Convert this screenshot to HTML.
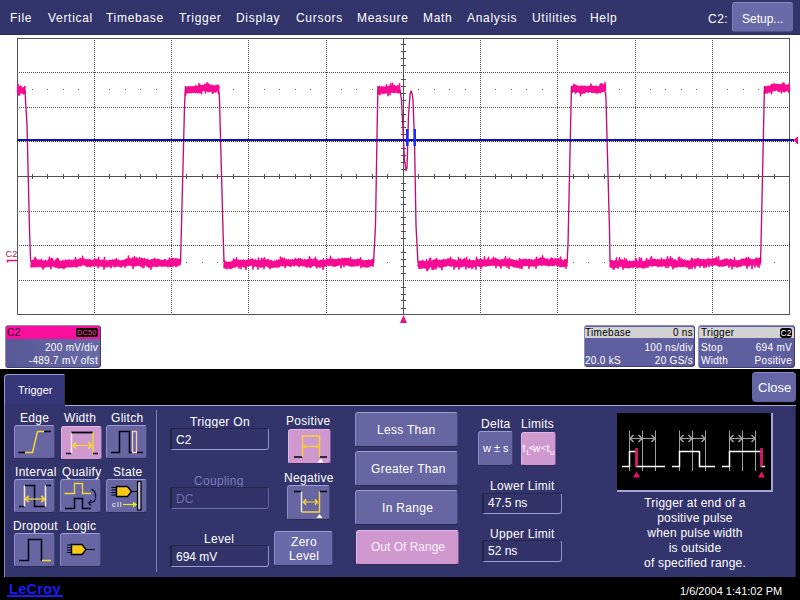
<!DOCTYPE html>
<html><head><meta charset="utf-8">
<style>
*{margin:0;padding:0;box-sizing:border-box}
html,body{width:800px;height:600px;overflow:hidden;background:#fff;font-family:"Liberation Sans",sans-serif;color:#fff}
.a{position:absolute}
.t{position:absolute;white-space:nowrap;line-height:1}
#menu{left:0;top:0;width:800px;height:35px;background:#34346c;border-bottom:1px solid #2a2a52}
#menu .t{font-size:12px;top:12px;color:#fff;letter-spacing:0.7px}
.setup{left:732px;top:2px;width:61px;height:30px;background:#6b6aa8;border-radius:3px;border-top:1px solid #8686c0;border-left:1px solid #8080bb;border-bottom:1px solid #505088}
.box{border-radius:4px;background:#5f5f9f;box-shadow:inset 1px 1px 0 #8e8cbc, inset -1px -1px 0 #3e3e6a}
.hdr{position:absolute;left:1px;top:1px;right:1px;height:12px}
.lab{font-size:12px;color:#fff;position:absolute;white-space:nowrap;line-height:1;letter-spacing:0.3px}
.btn{position:absolute;background:#6866a2;border-top:1px solid #9c9cd2;border-left:1px solid #8e8ec8;border-bottom:1px solid #2a2a55;border-right:1px solid #44447c;border-radius:3px}
.sel{background:#cf99cf;border-top:1px solid #e0b8e8;border-left:1px solid #deb6e6;border-bottom:1px solid #3a2a5a;border-right:1px solid #7a5a9a}
.inp{position:absolute;border-top:1px solid #26264e;border-left:2px solid #24243a;border-bottom:1px solid #9c9cd8;border-right:1px solid #9090d0;border-radius:0 3px 3px 0;background:#33336a}
.inp .t{font-size:12px;color:#fff;left:4px;top:5px}
</style></head><body>
<div id="menu" class="a">
  <div class="t" style="left:10px">File</div>
  <div class="t" style="left:48px">Vertical</div>
  <div class="t" style="left:106px">Timebase</div>
  <div class="t" style="left:179px">Trigger</div>
  <div class="t" style="left:236px">Display</div>
  <div class="t" style="left:296px">Cursors</div>
  <div class="t" style="left:357px">Measure</div>
  <div class="t" style="left:423px">Math</div>
  <div class="t" style="left:467px">Analysis</div>
  <div class="t" style="left:532px">Utilities</div>
  <div class="t" style="left:590px">Help</div>
  <div class="t" style="left:708px;font-size:12px;top:13px;letter-spacing:0.5px">C2:</div>
  <div class="a setup"><div class="t" style="left:9px;top:10px;font-size:12px;letter-spacing:0px">Setup...</div></div>
</div>

<svg class="a" style="left:0;top:0" width="800" height="330" viewBox="0 0 800 330">
<line x1="94.5" y1="38" x2="94.5" y2="314" stroke="#4a4a4a" stroke-width="1" stroke-dasharray="1 1"/>
<line x1="171.5" y1="38" x2="171.5" y2="314" stroke="#4a4a4a" stroke-width="1" stroke-dasharray="1 1"/>
<line x1="248.5" y1="38" x2="248.5" y2="314" stroke="#4a4a4a" stroke-width="1" stroke-dasharray="1 1"/>
<line x1="326.5" y1="38" x2="326.5" y2="314" stroke="#4a4a4a" stroke-width="1" stroke-dasharray="1 1"/>
<line x1="480.5" y1="38" x2="480.5" y2="314" stroke="#4a4a4a" stroke-width="1" stroke-dasharray="1 1"/>
<line x1="557.5" y1="38" x2="557.5" y2="314" stroke="#4a4a4a" stroke-width="1" stroke-dasharray="1 1"/>
<line x1="635.5" y1="38" x2="635.5" y2="314" stroke="#4a4a4a" stroke-width="1" stroke-dasharray="1 1"/>
<line x1="712.5" y1="38" x2="712.5" y2="314" stroke="#4a4a4a" stroke-width="1" stroke-dasharray="1 1"/>
<line x1="17" y1="72.5" x2="789" y2="72.5" stroke="#4a4a4a" stroke-width="1" stroke-dasharray="1 1"/>
<line x1="17" y1="107.5" x2="789" y2="107.5" stroke="#4a4a4a" stroke-width="1" stroke-dasharray="1 1"/>
<line x1="17" y1="141.5" x2="789" y2="141.5" stroke="#4a4a4a" stroke-width="1" stroke-dasharray="1 1"/>
<line x1="17" y1="211.5" x2="789" y2="211.5" stroke="#4a4a4a" stroke-width="1" stroke-dasharray="1 1"/>
<line x1="17" y1="245.5" x2="789" y2="245.5" stroke="#4a4a4a" stroke-width="1" stroke-dasharray="1 1"/>
<line x1="17" y1="280.5" x2="789" y2="280.5" stroke="#4a4a4a" stroke-width="1" stroke-dasharray="1 1"/>
<line x1="18" y1="176.5" x2="789" y2="176.5" stroke="#505050" stroke-width="1"/>
<line x1="403.5" y1="39" x2="403.5" y2="314" stroke="#505050" stroke-width="1"/>
<line x1="32.5" y1="174" x2="32.5" y2="179" stroke="#505050" stroke-width="1"/>
<line x1="47.5" y1="174" x2="47.5" y2="179" stroke="#505050" stroke-width="1"/>
<line x1="63.5" y1="174" x2="63.5" y2="179" stroke="#505050" stroke-width="1"/>
<line x1="78.5" y1="174" x2="78.5" y2="179" stroke="#505050" stroke-width="1"/>
<line x1="109.5" y1="174" x2="109.5" y2="179" stroke="#505050" stroke-width="1"/>
<line x1="125.5" y1="174" x2="125.5" y2="179" stroke="#505050" stroke-width="1"/>
<line x1="140.5" y1="174" x2="140.5" y2="179" stroke="#505050" stroke-width="1"/>
<line x1="156.5" y1="174" x2="156.5" y2="179" stroke="#505050" stroke-width="1"/>
<line x1="186.5" y1="174" x2="186.5" y2="179" stroke="#505050" stroke-width="1"/>
<line x1="202.5" y1="174" x2="202.5" y2="179" stroke="#505050" stroke-width="1"/>
<line x1="217.5" y1="174" x2="217.5" y2="179" stroke="#505050" stroke-width="1"/>
<line x1="233.5" y1="174" x2="233.5" y2="179" stroke="#505050" stroke-width="1"/>
<line x1="264.5" y1="174" x2="264.5" y2="179" stroke="#505050" stroke-width="1"/>
<line x1="279.5" y1="174" x2="279.5" y2="179" stroke="#505050" stroke-width="1"/>
<line x1="295.5" y1="174" x2="295.5" y2="179" stroke="#505050" stroke-width="1"/>
<line x1="310.5" y1="174" x2="310.5" y2="179" stroke="#505050" stroke-width="1"/>
<line x1="341.5" y1="174" x2="341.5" y2="179" stroke="#505050" stroke-width="1"/>
<line x1="356.5" y1="174" x2="356.5" y2="179" stroke="#505050" stroke-width="1"/>
<line x1="372.5" y1="174" x2="372.5" y2="179" stroke="#505050" stroke-width="1"/>
<line x1="387.5" y1="174" x2="387.5" y2="179" stroke="#505050" stroke-width="1"/>
<line x1="418.5" y1="174" x2="418.5" y2="179" stroke="#505050" stroke-width="1"/>
<line x1="434.5" y1="174" x2="434.5" y2="179" stroke="#505050" stroke-width="1"/>
<line x1="449.5" y1="174" x2="449.5" y2="179" stroke="#505050" stroke-width="1"/>
<line x1="465.5" y1="174" x2="465.5" y2="179" stroke="#505050" stroke-width="1"/>
<line x1="495.5" y1="174" x2="495.5" y2="179" stroke="#505050" stroke-width="1"/>
<line x1="511.5" y1="174" x2="511.5" y2="179" stroke="#505050" stroke-width="1"/>
<line x1="526.5" y1="174" x2="526.5" y2="179" stroke="#505050" stroke-width="1"/>
<line x1="542.5" y1="174" x2="542.5" y2="179" stroke="#505050" stroke-width="1"/>
<line x1="573.5" y1="174" x2="573.5" y2="179" stroke="#505050" stroke-width="1"/>
<line x1="588.5" y1="174" x2="588.5" y2="179" stroke="#505050" stroke-width="1"/>
<line x1="604.5" y1="174" x2="604.5" y2="179" stroke="#505050" stroke-width="1"/>
<line x1="619.5" y1="174" x2="619.5" y2="179" stroke="#505050" stroke-width="1"/>
<line x1="650.5" y1="174" x2="650.5" y2="179" stroke="#505050" stroke-width="1"/>
<line x1="665.5" y1="174" x2="665.5" y2="179" stroke="#505050" stroke-width="1"/>
<line x1="681.5" y1="174" x2="681.5" y2="179" stroke="#505050" stroke-width="1"/>
<line x1="696.5" y1="174" x2="696.5" y2="179" stroke="#505050" stroke-width="1"/>
<line x1="727.5" y1="174" x2="727.5" y2="179" stroke="#505050" stroke-width="1"/>
<line x1="743.5" y1="174" x2="743.5" y2="179" stroke="#505050" stroke-width="1"/>
<line x1="758.5" y1="174" x2="758.5" y2="179" stroke="#505050" stroke-width="1"/>
<line x1="774.5" y1="174" x2="774.5" y2="179" stroke="#505050" stroke-width="1"/>
<line x1="401" y1="44.5" x2="406" y2="44.5" stroke="#505050" stroke-width="1"/>
<line x1="401" y1="51.5" x2="406" y2="51.5" stroke="#505050" stroke-width="1"/>
<line x1="401" y1="58.5" x2="406" y2="58.5" stroke="#505050" stroke-width="1"/>
<line x1="401" y1="65.5" x2="406" y2="65.5" stroke="#505050" stroke-width="1"/>
<line x1="401" y1="79.5" x2="406" y2="79.5" stroke="#505050" stroke-width="1"/>
<line x1="401" y1="86.5" x2="406" y2="86.5" stroke="#505050" stroke-width="1"/>
<line x1="401" y1="93.5" x2="406" y2="93.5" stroke="#505050" stroke-width="1"/>
<line x1="401" y1="100.5" x2="406" y2="100.5" stroke="#505050" stroke-width="1"/>
<line x1="401" y1="114.5" x2="406" y2="114.5" stroke="#505050" stroke-width="1"/>
<line x1="401" y1="121.5" x2="406" y2="121.5" stroke="#505050" stroke-width="1"/>
<line x1="401" y1="127.5" x2="406" y2="127.5" stroke="#505050" stroke-width="1"/>
<line x1="401" y1="134.5" x2="406" y2="134.5" stroke="#505050" stroke-width="1"/>
<line x1="401" y1="148.5" x2="406" y2="148.5" stroke="#505050" stroke-width="1"/>
<line x1="401" y1="155.5" x2="406" y2="155.5" stroke="#505050" stroke-width="1"/>
<line x1="401" y1="162.5" x2="406" y2="162.5" stroke="#505050" stroke-width="1"/>
<line x1="401" y1="169.5" x2="406" y2="169.5" stroke="#505050" stroke-width="1"/>
<line x1="401" y1="183.5" x2="406" y2="183.5" stroke="#505050" stroke-width="1"/>
<line x1="401" y1="190.5" x2="406" y2="190.5" stroke="#505050" stroke-width="1"/>
<line x1="401" y1="197.5" x2="406" y2="197.5" stroke="#505050" stroke-width="1"/>
<line x1="401" y1="204.5" x2="406" y2="204.5" stroke="#505050" stroke-width="1"/>
<line x1="401" y1="217.5" x2="406" y2="217.5" stroke="#505050" stroke-width="1"/>
<line x1="401" y1="224.5" x2="406" y2="224.5" stroke="#505050" stroke-width="1"/>
<line x1="401" y1="231.5" x2="406" y2="231.5" stroke="#505050" stroke-width="1"/>
<line x1="401" y1="238.5" x2="406" y2="238.5" stroke="#505050" stroke-width="1"/>
<line x1="401" y1="252.5" x2="406" y2="252.5" stroke="#505050" stroke-width="1"/>
<line x1="401" y1="259.5" x2="406" y2="259.5" stroke="#505050" stroke-width="1"/>
<line x1="401" y1="266.5" x2="406" y2="266.5" stroke="#505050" stroke-width="1"/>
<line x1="401" y1="273.5" x2="406" y2="273.5" stroke="#505050" stroke-width="1"/>
<line x1="401" y1="287.5" x2="406" y2="287.5" stroke="#505050" stroke-width="1"/>
<line x1="401" y1="294.5" x2="406" y2="294.5" stroke="#505050" stroke-width="1"/>
<line x1="401" y1="300.5" x2="406" y2="300.5" stroke="#505050" stroke-width="1"/>
<line x1="401" y1="308.5" x2="406" y2="308.5" stroke="#505050" stroke-width="1"/>
<rect x="32" y="89" width="1" height="1" fill="#606060"/>
<rect x="47" y="89" width="1" height="1" fill="#606060"/>
<rect x="63" y="89" width="1" height="1" fill="#606060"/>
<rect x="78" y="89" width="1" height="1" fill="#606060"/>
<rect x="109" y="89" width="1" height="1" fill="#606060"/>
<rect x="125" y="89" width="1" height="1" fill="#606060"/>
<rect x="140" y="89" width="1" height="1" fill="#606060"/>
<rect x="156" y="89" width="1" height="1" fill="#606060"/>
<rect x="186" y="89" width="1" height="1" fill="#606060"/>
<rect x="202" y="89" width="1" height="1" fill="#606060"/>
<rect x="217" y="89" width="1" height="1" fill="#606060"/>
<rect x="233" y="89" width="1" height="1" fill="#606060"/>
<rect x="264" y="89" width="1" height="1" fill="#606060"/>
<rect x="279" y="89" width="1" height="1" fill="#606060"/>
<rect x="295" y="89" width="1" height="1" fill="#606060"/>
<rect x="310" y="89" width="1" height="1" fill="#606060"/>
<rect x="341" y="89" width="1" height="1" fill="#606060"/>
<rect x="356" y="89" width="1" height="1" fill="#606060"/>
<rect x="372" y="89" width="1" height="1" fill="#606060"/>
<rect x="387" y="89" width="1" height="1" fill="#606060"/>
<rect x="418" y="89" width="1" height="1" fill="#606060"/>
<rect x="434" y="89" width="1" height="1" fill="#606060"/>
<rect x="449" y="89" width="1" height="1" fill="#606060"/>
<rect x="465" y="89" width="1" height="1" fill="#606060"/>
<rect x="495" y="89" width="1" height="1" fill="#606060"/>
<rect x="511" y="89" width="1" height="1" fill="#606060"/>
<rect x="526" y="89" width="1" height="1" fill="#606060"/>
<rect x="542" y="89" width="1" height="1" fill="#606060"/>
<rect x="573" y="89" width="1" height="1" fill="#606060"/>
<rect x="588" y="89" width="1" height="1" fill="#606060"/>
<rect x="604" y="89" width="1" height="1" fill="#606060"/>
<rect x="619" y="89" width="1" height="1" fill="#606060"/>
<rect x="650" y="89" width="1" height="1" fill="#606060"/>
<rect x="665" y="89" width="1" height="1" fill="#606060"/>
<rect x="681" y="89" width="1" height="1" fill="#606060"/>
<rect x="696" y="89" width="1" height="1" fill="#606060"/>
<rect x="727" y="89" width="1" height="1" fill="#606060"/>
<rect x="743" y="89" width="1" height="1" fill="#606060"/>
<rect x="758" y="89" width="1" height="1" fill="#606060"/>
<rect x="774" y="89" width="1" height="1" fill="#606060"/>
<rect x="32" y="262" width="1" height="1" fill="#606060"/>
<rect x="47" y="262" width="1" height="1" fill="#606060"/>
<rect x="63" y="262" width="1" height="1" fill="#606060"/>
<rect x="78" y="262" width="1" height="1" fill="#606060"/>
<rect x="109" y="262" width="1" height="1" fill="#606060"/>
<rect x="125" y="262" width="1" height="1" fill="#606060"/>
<rect x="140" y="262" width="1" height="1" fill="#606060"/>
<rect x="156" y="262" width="1" height="1" fill="#606060"/>
<rect x="186" y="262" width="1" height="1" fill="#606060"/>
<rect x="202" y="262" width="1" height="1" fill="#606060"/>
<rect x="217" y="262" width="1" height="1" fill="#606060"/>
<rect x="233" y="262" width="1" height="1" fill="#606060"/>
<rect x="264" y="262" width="1" height="1" fill="#606060"/>
<rect x="279" y="262" width="1" height="1" fill="#606060"/>
<rect x="295" y="262" width="1" height="1" fill="#606060"/>
<rect x="310" y="262" width="1" height="1" fill="#606060"/>
<rect x="341" y="262" width="1" height="1" fill="#606060"/>
<rect x="356" y="262" width="1" height="1" fill="#606060"/>
<rect x="372" y="262" width="1" height="1" fill="#606060"/>
<rect x="387" y="262" width="1" height="1" fill="#606060"/>
<rect x="418" y="262" width="1" height="1" fill="#606060"/>
<rect x="434" y="262" width="1" height="1" fill="#606060"/>
<rect x="449" y="262" width="1" height="1" fill="#606060"/>
<rect x="465" y="262" width="1" height="1" fill="#606060"/>
<rect x="495" y="262" width="1" height="1" fill="#606060"/>
<rect x="511" y="262" width="1" height="1" fill="#606060"/>
<rect x="526" y="262" width="1" height="1" fill="#606060"/>
<rect x="542" y="262" width="1" height="1" fill="#606060"/>
<rect x="573" y="262" width="1" height="1" fill="#606060"/>
<rect x="588" y="262" width="1" height="1" fill="#606060"/>
<rect x="604" y="262" width="1" height="1" fill="#606060"/>
<rect x="619" y="262" width="1" height="1" fill="#606060"/>
<rect x="650" y="262" width="1" height="1" fill="#606060"/>
<rect x="665" y="262" width="1" height="1" fill="#606060"/>
<rect x="681" y="262" width="1" height="1" fill="#606060"/>
<rect x="696" y="262" width="1" height="1" fill="#606060"/>
<rect x="727" y="262" width="1" height="1" fill="#606060"/>
<rect x="743" y="262" width="1" height="1" fill="#606060"/>
<rect x="758" y="262" width="1" height="1" fill="#606060"/>
<rect x="774" y="262" width="1" height="1" fill="#606060"/>
<rect x="17.5" y="38.5" width="772" height="276" fill="none" stroke="#555" stroke-width="1"/>
<g stroke-linejoin="round">
<path d="M17.5,92.1 L18.0,84.2 L18.5,94.9 L19.0,87.5 L19.5,94.9 L20.0,86.4 L20.5,92.4 L21.0,86.4 L21.5,92.9 L22.0,88.1 L22.5,93.0 L23.0,88.1 L23.5,93.9 L24.0,87.5 L24.5,93.3 L25.0,85.9" fill="none" stroke="#f80a92" stroke-width="1.6"/>
<path d="M31.0,267.5 L31.5,261.5 L32.0,266.9 L32.5,260.5 L33.0,266.2 L33.5,260.6 L34.0,266.8 L34.5,258.3 L35.0,266.6 L35.5,257.6 L36.0,266.5 L36.5,259.7 L37.0,266.4 L37.5,260.2 L38.0,266.7 L38.5,260.4 L39.0,265.6 L39.5,260.3 L40.0,267.0 L40.5,260.9 L41.0,265.9 L41.5,259.4 L42.0,267.2 L42.5,261.4 L43.0,269.1 L43.5,261.0 L44.0,267.4 L44.5,261.4 L45.0,266.6 L45.5,260.2 L46.0,266.2 L46.5,261.2 L47.0,266.7 L47.5,261.4 L48.0,266.2 L48.5,259.8 L49.0,266.3 L49.5,257.2 L50.0,266.6 L50.5,259.8 L51.0,268.8 L51.5,258.6 L52.0,265.7 L52.5,258.8 L53.0,265.8 L53.5,261.4 L54.0,266.8 L54.5,261.3 L55.0,266.7 L55.5,260.6 L56.0,267.1 L56.5,259.4 L57.0,267.0 L57.5,258.3 L58.0,267.5 L58.5,259.3 L59.0,268.3 L59.5,261.4 L60.0,267.3 L60.5,261.2 L61.0,267.8 L61.5,261.9 L62.0,267.9 L62.5,260.7 L63.0,267.3 L63.5,261.0 L64.0,268.7 L64.5,261.2 L65.0,267.3 L65.5,260.0 L66.0,267.2 L66.5,261.0 L67.0,265.9 L67.5,260.4 L68.0,267.0 L68.5,260.4 L69.0,265.9 L69.5,260.1 L70.0,267.0 L70.5,261.4 L71.0,266.5 L71.5,260.2 L72.0,266.7 L72.5,260.7 L73.0,266.3 L73.5,260.4 L74.0,266.3 L74.5,260.2 L75.0,266.5 L75.5,257.5 L76.0,266.8 L76.5,259.9 L77.0,266.9 L77.5,260.7 L78.0,265.7 L78.5,259.9 L79.0,265.6 L79.5,259.1 L80.0,265.4 L80.5,258.9 L81.0,265.9 L81.5,259.3 L82.0,264.4 L82.5,256.4 L83.0,264.7 L83.5,259.0 L84.0,265.0 L84.5,259.4 L85.0,264.8 L85.5,260.0 L86.0,266.0 L86.5,259.7 L87.0,266.4 L87.5,259.8 L88.0,265.9 L88.5,260.1 L89.0,265.9 L89.5,259.8 L90.0,266.6 L90.5,260.0 L91.0,266.4 L91.5,260.5 L92.0,265.1 L92.5,260.5 L93.0,266.0 L93.5,260.2 L94.0,265.6 L94.5,258.9 L95.0,264.8 L95.5,259.5 L96.0,266.0 L96.5,259.9 L97.0,265.2 L97.5,259.9 L98.0,267.8 L98.5,257.5 L99.0,265.7 L99.5,260.4 L100.0,266.2 L100.5,260.6 L101.0,265.3 L101.5,260.6 L102.0,266.1 L102.5,260.0 L103.0,265.9 L103.5,260.6 L104.0,269.3 L104.5,257.6 L105.0,266.9 L105.5,261.5 L106.0,266.0 L106.5,260.9 L107.0,266.7 L107.5,261.1 L108.0,266.5 L108.5,261.1 L109.0,265.6 L109.5,260.6 L110.0,266.5 L110.5,260.2 L111.0,267.8 L111.5,260.8 L112.0,266.0 L112.5,260.1 L113.0,265.3 L113.5,260.2 L114.0,266.5 L114.5,260.1 L115.0,266.8 L115.5,259.8 L116.0,266.4 L116.5,258.8 L117.0,265.7 L117.5,261.0 L118.0,265.8 L118.5,260.1 L119.0,266.2 L119.5,261.0 L120.0,266.0 L120.5,261.0 L121.0,267.1 L121.5,260.9 L122.0,265.9 L122.5,261.0 L123.0,265.9 L123.5,260.4 L124.0,264.9 L124.5,260.3 L125.0,267.4 L125.5,259.8 L126.0,265.2 L126.5,259.0 L127.0,265.6 L127.5,259.3 L128.0,264.3 L128.5,256.0 L129.0,265.5 L129.5,258.7 L130.0,264.4 L130.5,259.1 L131.0,265.5 L131.5,259.2 L132.0,265.5 L132.5,257.8 L133.0,268.4 L133.5,259.5 L134.0,265.7 L134.5,256.7 L135.0,265.9 L135.5,259.6 L136.0,264.8 L136.5,257.7 L137.0,265.8 L137.5,259.1 L138.0,265.3 L138.5,259.4 L139.0,265.5 L139.5,257.5 L140.0,264.5 L140.5,259.3 L141.0,266.7 L141.5,258.6 L142.0,265.0 L142.5,258.8 L143.0,267.8 L143.5,259.4 L144.0,267.1 L144.5,258.5 L145.0,264.9 L145.5,259.7 L146.0,264.8 L146.5,260.1 L147.0,266.2 L147.5,259.3 L148.0,266.4 L148.5,260.5 L149.0,267.4 L149.5,260.3 L150.0,265.9 L150.5,260.6 L151.0,269.1 L151.5,259.9 L152.0,266.9 L152.5,259.8 L153.0,266.0 L153.5,259.5 L154.0,265.8 L154.5,258.6 L155.0,266.4 L155.5,259.3 L156.0,265.4 L156.5,260.3 L157.0,266.4 L157.5,259.3 L158.0,266.2 L158.5,259.7 L159.0,264.9 L159.5,259.9 L160.0,265.9 L160.5,260.6 L161.0,265.3 L161.5,260.4 L162.0,266.4 L162.5,260.7 L163.0,265.9 L163.5,260.6 L164.0,265.8 L164.5,259.9 L165.0,266.0 L165.5,259.8 L166.0,265.9 L166.5,261.2 L167.0,265.7 L167.5,260.8 L168.0,266.8 L168.5,260.3 L169.0,266.0 L169.5,258.0 L170.0,266.4 L170.5,259.6 L171.0,265.9 L171.5,259.7 L172.0,265.0 L172.5,258.5 L173.0,266.4 L173.5,258.7 L174.0,264.8 L174.5,259.8 L175.0,265.5 L175.5,258.5 L176.0,266.6 L176.5,259.1 L177.0,265.7 L177.5,259.0 L178.0,265.1 L178.5,260.1 L179.0,264.9 L179.5,259.3 L180.0,264.8 L180.5,259.3" fill="none" stroke="#f80a92" stroke-width="1.6"/>
<path d="M185.5,96.0 L186.0,87.5 L186.5,92.8 L187.0,88.0 L187.5,92.8 L188.0,86.6 L188.5,92.5 L189.0,87.0 L189.5,92.6 L190.0,87.1 L190.5,92.5 L191.0,86.7 L191.5,92.8 L192.0,87.0 L192.5,92.0 L193.0,86.8 L193.5,92.5 L194.0,86.8 L194.5,91.9 L195.0,86.8 L195.5,92.6 L196.0,85.7 L196.5,91.7 L197.0,86.4 L197.5,92.8 L198.0,86.3 L198.5,92.7 L199.0,83.8 L199.5,92.3 L200.0,85.4 L200.5,92.1 L201.0,85.9 L201.5,93.8 L202.0,85.4 L202.5,90.6 L203.0,85.7 L203.5,90.5 L204.0,85.4 L204.5,90.1 L205.0,84.2 L205.5,92.9 L206.0,85.0 L206.5,90.2 L207.0,82.7 L207.5,91.3 L208.0,83.6 L208.5,91.7 L209.0,84.9 L209.5,91.0 L210.0,84.8 L210.5,91.1 L211.0,86.0 L211.5,90.9 L212.0,85.2 L212.5,93.5 L213.0,85.9 L213.5,92.5 L214.0,86.3 L214.5,91.7 L215.0,86.3 L215.5,92.0 L216.0,85.2 L216.5,91.2 L217.0,85.7 L217.5,90.7 L218.0,85.0 L218.5,93.7 L219.0,85.6" fill="none" stroke="#f80a92" stroke-width="1.6"/>
<path d="M224.0,268.4 L224.5,260.5 L225.0,267.9 L225.5,262.2 L226.0,267.9 L226.5,262.0 L227.0,268.7 L227.5,262.9 L228.0,267.8 L228.5,262.4 L229.0,267.6 L229.5,262.5 L230.0,268.4 L230.5,262.1 L231.0,268.4 L231.5,262.0 L232.0,267.5 L232.5,261.9 L233.0,267.5 L233.5,259.0 L234.0,266.1 L234.5,260.0 L235.0,267.1 L235.5,260.0 L236.0,265.9 L236.5,257.9 L237.0,266.4 L237.5,260.6 L238.0,265.8 L238.5,260.3 L239.0,268.3 L239.5,260.3 L240.0,266.1 L240.5,260.2 L241.0,268.7 L241.5,260.7 L242.0,266.0 L242.5,260.5 L243.0,266.3 L243.5,260.1 L244.0,266.7 L244.5,260.9 L245.0,267.3 L245.5,261.1 L246.0,269.5 L246.5,260.5 L247.0,266.0 L247.5,260.3 L248.0,265.2 L248.5,259.8 L249.0,265.1 L249.5,260.0 L250.0,265.1 L250.5,259.7 L251.0,264.9 L251.5,259.2 L252.0,265.1 L252.5,259.1 L253.0,268.9 L253.5,260.1 L254.0,266.1 L254.5,260.7 L255.0,265.7 L255.5,259.9 L256.0,265.9 L256.5,260.8 L257.0,266.5 L257.5,261.3 L258.0,269.3 L258.5,258.0 L259.0,266.3 L259.5,261.0 L260.0,266.6 L260.5,260.9 L261.0,267.1 L261.5,258.4 L262.0,266.7 L262.5,260.4 L263.0,266.5 L263.5,259.1 L264.0,268.7 L264.5,257.9 L265.0,265.7 L265.5,260.0 L266.0,265.6 L266.5,260.6 L267.0,265.7 L267.5,259.7 L268.0,266.8 L268.5,259.8 L269.0,267.2 L269.5,261.3 L270.0,268.7 L270.5,260.5 L271.0,267.5 L271.5,260.6 L272.0,267.0 L272.5,261.7 L273.0,267.1 L273.5,262.0 L274.0,266.6 L274.5,261.0 L275.0,266.6 L275.5,261.8 L276.0,267.2 L276.5,260.4 L277.0,266.9 L277.5,261.4 L278.0,266.7 L278.5,260.0 L279.0,266.9 L279.5,260.4 L280.0,265.8 L280.5,257.0 L281.0,265.3 L281.5,259.0 L282.0,265.8 L282.5,258.0 L283.0,265.7 L283.5,259.7 L284.0,265.0 L284.5,258.4 L285.0,267.7 L285.5,260.3 L286.0,265.9 L286.5,259.8 L287.0,265.3 L287.5,260.5 L288.0,265.3 L288.5,259.5 L289.0,265.8 L289.5,260.9 L290.0,266.0 L290.5,259.8 L291.0,266.5 L291.5,260.3 L292.0,264.9 L292.5,259.8 L293.0,264.7 L293.5,260.2 L294.0,265.9 L294.5,259.7 L295.0,265.0 L295.5,258.6 L296.0,264.6 L296.5,259.7 L297.0,265.2 L297.5,259.7 L298.0,265.2 L298.5,258.6 L299.0,266.8 L299.5,259.9 L300.0,265.5 L300.5,258.9 L301.0,265.0 L301.5,259.7 L302.0,265.7 L302.5,259.7 L303.0,265.4 L303.5,260.9 L304.0,265.6 L304.5,259.6 L305.0,265.9 L305.5,260.6 L306.0,266.8 L306.5,260.0 L307.0,266.9 L307.5,259.7 L308.0,266.6 L308.5,259.8 L309.0,265.6 L309.5,256.8 L310.0,267.3 L310.5,259.2 L311.0,267.1 L311.5,259.5 L312.0,265.9 L312.5,260.5 L313.0,265.4 L313.5,259.4 L314.0,265.1 L314.5,259.3 L315.0,265.3 L315.5,257.2 L316.0,266.6 L316.5,259.9 L317.0,267.9 L317.5,260.2 L318.0,266.3 L318.5,261.5 L319.0,266.4 L319.5,261.1 L320.0,267.5 L320.5,260.4 L321.0,266.0 L321.5,260.9 L322.0,266.4 L322.5,260.6 L323.0,269.4 L323.5,258.7 L324.0,266.6 L324.5,261.0 L325.0,265.9 L325.5,260.4 L326.0,265.4 L326.5,260.1 L327.0,265.1 L327.5,259.2 L328.0,264.7 L328.5,260.1 L329.0,265.6 L329.5,259.3 L330.0,265.2 L330.5,256.4 L331.0,264.7 L331.5,260.0 L332.0,265.6 L332.5,259.2 L333.0,265.6 L333.5,259.5 L334.0,266.0 L334.5,260.2 L335.0,266.3 L335.5,259.5 L336.0,265.6 L336.5,259.7 L337.0,265.5 L337.5,260.1 L338.0,265.1 L338.5,258.9 L339.0,264.6 L339.5,259.5 L340.0,264.4 L340.5,259.4 L341.0,267.9 L341.5,259.4 L342.0,265.3 L342.5,258.3 L343.0,264.0 L343.5,259.2 L344.0,266.6 L344.5,258.2 L345.0,264.6 L345.5,258.9 L346.0,264.9 L346.5,258.6 L347.0,264.9 L347.5,258.9 L348.0,264.8 L348.5,258.9 L349.0,265.8 L349.5,259.4 L350.0,265.5 L350.5,257.6 L351.0,266.2 L351.5,259.7 L352.0,265.6 L352.5,259.7 L353.0,266.0 L353.5,260.3 L354.0,266.0 L354.5,259.7 L355.0,264.7 L355.5,260.1 L356.0,266.0 L356.5,260.1 L357.0,265.3 L357.5,259.4 L358.0,265.7 L358.5,259.5 L359.0,264.8 L359.5,259.7 L360.0,264.8 L360.5,257.8 L361.0,267.8 L361.5,260.0 L362.0,265.6 L362.5,260.6 L363.0,266.8 L363.5,260.8 L364.0,266.1 L364.5,261.1 L365.0,267.0 L365.5,260.7 L366.0,266.1 L366.5,260.9 L367.0,267.1 L367.5,260.7 L368.0,266.5 L368.5,260.0 L369.0,266.8 L369.5,260.5 L370.0,265.9 L370.5,260.9 L371.0,265.5 L371.5,260.2 L372.0,265.5 L372.5,259.4 L373.0,266.1 L373.5,260.2" fill="none" stroke="#f80a92" stroke-width="1.6"/>
<path d="M378.0,93.3 L378.5,87.5 L379.0,94.2 L379.5,86.3 L380.0,94.6 L380.5,87.6 L381.0,92.9 L381.5,86.7 L382.0,92.7 L382.5,87.2 L383.0,93.6 L383.5,87.0 L384.0,92.8 L384.5,87.4 L385.0,93.1 L385.5,87.2 L386.0,92.6 L386.5,84.8 L387.0,92.3 L387.5,86.9 L388.0,95.6 L388.5,86.7 L389.0,92.6 L389.5,86.6 L390.0,94.8 L390.5,83.7 L391.0,92.3 L391.5,86.4 L392.0,92.0 L392.5,83.4 L393.0,92.2 L393.5,85.6 L394.0,92.1 L394.5,85.9 L395.0,92.1 L395.5,86.4 L396.0,92.0 L396.5,86.7 L397.0,92.1 L397.5,85.9 L398.0,92.9 L398.5,86.9 L399.0,92.6 L399.5,83.8 L400.0,92.9" fill="none" stroke="#f80a92" stroke-width="1.6"/>
<path d="M418.0,266.7 L418.5,262.3 L419.0,268.1 L419.5,261.4 L420.0,268.2 L420.5,261.6 L421.0,268.0 L421.5,261.6 L422.0,268.1 L422.5,260.4 L423.0,267.3 L423.5,261.6 L424.0,267.9 L424.5,261.8 L425.0,267.7 L425.5,262.4 L426.0,267.9 L426.5,259.7 L427.0,270.8 L427.5,261.8 L428.0,269.8 L428.5,261.5 L429.0,268.1 L429.5,258.8 L430.0,266.6 L430.5,258.4 L431.0,266.2 L431.5,261.5 L432.0,269.3 L432.5,261.0 L433.0,269.3 L433.5,260.2 L434.0,268.9 L434.5,260.1 L435.0,267.0 L435.5,259.8 L436.0,269.0 L436.5,258.6 L437.0,266.9 L437.5,260.1 L438.0,265.9 L438.5,260.7 L439.0,267.0 L439.5,260.4 L440.0,266.9 L440.5,261.0 L441.0,267.1 L441.5,260.3 L442.0,269.8 L442.5,260.3 L443.0,266.1 L443.5,259.6 L444.0,266.3 L444.5,260.3 L445.0,265.7 L445.5,259.8 L446.0,266.1 L446.5,260.5 L447.0,265.4 L447.5,259.1 L448.0,264.7 L448.5,259.1 L449.0,265.5 L449.5,259.1 L450.0,265.8 L450.5,257.3 L451.0,266.2 L451.5,259.6 L452.0,265.5 L452.5,259.9 L453.0,265.7 L453.5,260.0 L454.0,269.3 L454.5,260.2 L455.0,266.7 L455.5,260.2 L456.0,266.6 L456.5,261.3 L457.0,266.2 L457.5,261.1 L458.0,266.5 L458.5,257.5 L459.0,269.2 L459.5,260.2 L460.0,266.6 L460.5,259.1 L461.0,267.0 L461.5,260.4 L462.0,265.8 L462.5,260.4 L463.0,266.5 L463.5,259.5 L464.0,265.4 L464.5,258.8 L465.0,266.3 L465.5,260.5 L466.0,268.9 L466.5,257.4 L467.0,266.2 L467.5,260.6 L468.0,267.0 L468.5,261.1 L469.0,267.7 L469.5,259.3 L470.0,266.9 L470.5,260.7 L471.0,266.5 L471.5,261.0 L472.0,268.8 L472.5,260.8 L473.0,267.3 L473.5,260.9 L474.0,266.2 L474.5,261.2 L475.0,266.5 L475.5,261.0 L476.0,269.1 L476.5,257.2 L477.0,265.6 L477.5,259.5 L478.0,265.3 L478.5,260.6 L479.0,266.2 L479.5,259.9 L480.0,266.2 L480.5,259.6 L481.0,268.4 L481.5,259.8 L482.0,266.3 L482.5,260.1 L483.0,265.5 L483.5,260.3 L484.0,266.0 L484.5,256.9 L485.0,265.4 L485.5,260.0 L486.0,266.0 L486.5,260.6 L487.0,265.8 L487.5,259.4 L488.0,265.3 L488.5,257.2 L489.0,265.4 L489.5,260.5 L490.0,265.2 L490.5,260.3 L491.0,265.3 L491.5,259.4 L492.0,264.6 L492.5,259.6 L493.0,265.3 L493.5,257.4 L494.0,264.9 L494.5,259.2 L495.0,264.9 L495.5,258.4 L496.0,267.6 L496.5,259.2 L497.0,264.3 L497.5,259.5 L498.0,265.8 L498.5,260.2 L499.0,265.4 L499.5,260.1 L500.0,266.2 L500.5,260.4 L501.0,268.2 L501.5,260.1 L502.0,265.4 L502.5,259.6 L503.0,265.7 L503.5,260.3 L504.0,265.2 L504.5,259.3 L505.0,265.9 L505.5,256.7 L506.0,265.3 L506.5,260.4 L507.0,267.1 L507.5,259.4 L508.0,264.7 L508.5,259.5 L509.0,268.5 L509.5,258.0 L510.0,265.5 L510.5,260.0 L511.0,265.5 L511.5,259.7 L512.0,265.2 L512.5,259.7 L513.0,266.5 L513.5,260.5 L514.0,266.8 L514.5,260.7 L515.0,266.9 L515.5,261.1 L516.0,266.5 L516.5,260.4 L517.0,267.2 L517.5,261.6 L518.0,267.5 L518.5,261.2 L519.0,266.9 L519.5,258.5 L520.0,268.1 L520.5,259.8 L521.0,266.9 L521.5,259.8 L522.0,268.6 L522.5,260.4 L523.0,265.4 L523.5,259.2 L524.0,265.2 L524.5,259.8 L525.0,265.2 L525.5,259.4 L526.0,265.6 L526.5,259.6 L527.0,265.4 L527.5,260.2 L528.0,265.0 L528.5,259.9 L529.0,268.1 L529.5,259.4 L530.0,265.9 L530.5,260.5 L531.0,265.8 L531.5,259.9 L532.0,265.6 L532.5,260.5 L533.0,265.7 L533.5,260.7 L534.0,266.3 L534.5,259.7 L535.0,265.2 L535.5,259.9 L536.0,268.3 L536.5,257.2 L537.0,264.9 L537.5,259.7 L538.0,265.5 L538.5,259.4 L539.0,264.4 L539.5,258.5 L540.0,265.0 L540.5,258.2 L541.0,264.9 L541.5,258.2 L542.0,265.2 L542.5,255.9 L543.0,264.8 L543.5,258.2 L544.0,264.8 L544.5,258.6 L545.0,264.9 L545.5,259.4 L546.0,265.0 L546.5,259.5 L547.0,265.2 L547.5,259.1 L548.0,265.5 L548.5,260.0 L549.0,265.7 L549.5,260.4 L550.0,265.3 L550.5,259.1 L551.0,265.0 L551.5,258.1 L552.0,265.4 L552.5,258.7 L553.0,265.2 L553.5,259.2 L554.0,265.4 L554.5,259.4 L555.0,264.8 L555.5,258.9 L556.0,264.5 L556.5,259.5 L557.0,265.4 L557.5,258.8 L558.0,265.3 L558.5,258.9 L559.0,265.7 L559.5,260.5 L560.0,266.7 L560.5,257.1 L561.0,266.5 L561.5,259.7 L562.0,266.3 L562.5,260.9 L563.0,266.5 L563.5,261.2 L564.0,266.7 L564.5,259.9 L565.0,265.7 L565.5,260.1 L566.0,268.3 L566.5,259.8 L567.0,266.4" fill="none" stroke="#f80a92" stroke-width="1.6"/>
<path d="M571.5,92.4 L572.0,86.8 L572.5,92.2 L573.0,86.0 L573.5,91.3 L574.0,84.4 L574.5,91.2 L575.0,85.3 L575.5,93.1 L576.0,85.4 L576.5,92.1 L577.0,86.5 L577.5,91.2 L578.0,86.0 L578.5,92.0 L579.0,87.0 L579.5,92.4 L580.0,86.6 L580.5,95.6 L581.0,86.1 L581.5,93.1 L582.0,87.0 L582.5,93.3 L583.0,86.0 L583.5,92.4 L584.0,87.1 L584.5,93.0 L585.0,86.1 L585.5,91.8 L586.0,86.8 L586.5,91.8 L587.0,86.8 L587.5,91.8 L588.0,86.7 L588.5,92.3 L589.0,86.3 L589.5,91.4 L590.0,86.6 L590.5,91.5 L591.0,84.0 L591.5,92.3 L592.0,86.1 L592.5,92.4 L593.0,86.4 L593.5,91.9 L594.0,86.8 L594.5,92.3 L595.0,86.6 L595.5,92.8 L596.0,86.0 L596.5,92.4 L597.0,86.6 L597.5,93.2 L598.0,86.7 L598.5,92.1 L599.0,86.8 L599.5,92.4 L600.0,84.7 L600.5,92.7 L601.0,83.7 L601.5,91.6 L602.0,83.9 L602.5,91.1 L603.0,85.2 L603.5,91.2 L604.0,84.9 L604.5,91.7 L605.0,82.5 L605.5,91.2" fill="none" stroke="#f80a92" stroke-width="1.6"/>
<path d="M610.0,266.7 L610.5,260.7 L611.0,267.5 L611.5,260.9 L612.0,266.4 L612.5,260.9 L613.0,268.8 L613.5,261.7 L614.0,269.1 L614.5,261.0 L615.0,267.5 L615.5,260.8 L616.0,266.8 L616.5,257.9 L617.0,267.1 L617.5,261.5 L618.0,268.3 L618.5,261.2 L619.0,265.9 L619.5,257.7 L620.0,266.1 L620.5,259.9 L621.0,265.6 L621.5,260.5 L622.0,266.6 L622.5,260.0 L623.0,269.2 L623.5,260.8 L624.0,267.3 L624.5,258.2 L625.0,267.4 L625.5,261.1 L626.0,267.4 L626.5,259.3 L627.0,267.2 L627.5,261.9 L628.0,267.8 L628.5,262.1 L629.0,267.6 L629.5,261.1 L630.0,267.3 L630.5,262.2 L631.0,267.2 L631.5,261.5 L632.0,266.8 L632.5,261.2 L633.0,267.6 L633.5,261.8 L634.0,266.7 L634.5,261.7 L635.0,266.3 L635.5,258.9 L636.0,266.6 L636.5,259.4 L637.0,267.4 L637.5,261.5 L638.0,267.4 L638.5,261.5 L639.0,266.7 L639.5,257.9 L640.0,267.2 L640.5,260.5 L641.0,266.7 L641.5,258.4 L642.0,267.7 L642.5,261.9 L643.0,267.8 L643.5,261.9 L644.0,267.7 L644.5,261.6 L645.0,267.6 L645.5,261.4 L646.0,266.7 L646.5,258.5 L647.0,266.9 L647.5,260.4 L648.0,267.1 L648.5,260.4 L649.0,265.8 L649.5,260.7 L650.0,265.3 L650.5,258.4 L651.0,265.5 L651.5,256.7 L652.0,266.0 L652.5,259.7 L653.0,265.7 L653.5,259.7 L654.0,265.4 L654.5,259.2 L655.0,265.1 L655.5,259.9 L656.0,265.5 L656.5,260.6 L657.0,265.8 L657.5,259.5 L658.0,266.7 L658.5,260.0 L659.0,265.4 L659.5,260.0 L660.0,266.1 L660.5,260.2 L661.0,265.6 L661.5,258.3 L662.0,266.1 L662.5,260.5 L663.0,265.4 L663.5,259.8 L664.0,265.5 L664.5,260.1 L665.0,265.9 L665.5,260.0 L666.0,267.6 L666.5,259.7 L667.0,265.2 L667.5,256.9 L668.0,267.4 L668.5,260.1 L669.0,265.9 L669.5,259.3 L670.0,265.0 L670.5,256.9 L671.0,265.7 L671.5,259.4 L672.0,266.5 L672.5,258.6 L673.0,268.9 L673.5,261.0 L674.0,266.9 L674.5,260.1 L675.0,267.2 L675.5,260.1 L676.0,266.1 L676.5,261.0 L677.0,266.9 L677.5,261.3 L678.0,266.8 L678.5,258.0 L679.0,265.7 L679.5,257.2 L680.0,266.4 L680.5,260.7 L681.0,266.5 L681.5,258.5 L682.0,266.4 L682.5,260.0 L683.0,266.2 L683.5,260.7 L684.0,266.1 L684.5,259.8 L685.0,265.4 L685.5,260.9 L686.0,266.9 L686.5,261.3 L687.0,267.0 L687.5,260.9 L688.0,266.1 L688.5,261.0 L689.0,268.8 L689.5,261.4 L690.0,268.4 L690.5,261.1 L691.0,266.8 L691.5,258.2 L692.0,268.8 L692.5,258.9 L693.0,266.5 L693.5,260.6 L694.0,265.6 L694.5,259.9 L695.0,268.2 L695.5,259.3 L696.0,265.9 L696.5,259.3 L697.0,264.9 L697.5,258.7 L698.0,265.4 L698.5,258.8 L699.0,265.1 L699.5,259.5 L700.0,267.2 L700.5,259.6 L701.0,265.2 L701.5,259.9 L702.0,265.1 L702.5,260.4 L703.0,265.4 L703.5,259.6 L704.0,267.6 L704.5,260.1 L705.0,265.7 L705.5,260.0 L706.0,267.3 L706.5,259.6 L707.0,265.3 L707.5,259.7 L708.0,264.7 L708.5,258.8 L709.0,266.8 L709.5,259.5 L710.0,264.5 L710.5,259.5 L711.0,265.3 L711.5,259.3 L712.0,265.4 L712.5,259.4 L713.0,265.2 L713.5,259.4 L714.0,264.7 L714.5,258.7 L715.0,264.4 L715.5,258.7 L716.0,264.9 L716.5,257.2 L717.0,264.6 L717.5,259.9 L718.0,265.7 L718.5,256.7 L719.0,265.9 L719.5,260.8 L720.0,266.3 L720.5,260.8 L721.0,265.5 L721.5,260.9 L722.0,266.0 L722.5,260.1 L723.0,266.3 L723.5,260.4 L724.0,265.6 L724.5,259.6 L725.0,265.5 L725.5,259.2 L726.0,265.3 L726.5,259.1 L727.0,264.8 L727.5,259.5 L728.0,265.3 L728.5,260.1 L729.0,267.2 L729.5,260.5 L730.0,265.8 L730.5,259.2 L731.0,265.3 L731.5,259.7 L732.0,268.9 L732.5,260.7 L733.0,266.3 L733.5,260.8 L734.0,266.4 L734.5,257.9 L735.0,265.9 L735.5,260.9 L736.0,265.9 L736.5,260.9 L737.0,267.2 L737.5,261.0 L738.0,266.0 L738.5,260.8 L739.0,266.6 L739.5,260.5 L740.0,265.4 L740.5,260.4 L741.0,266.2 L741.5,259.3 L742.0,265.0 L742.5,259.5 L743.0,264.7 L743.5,259.1 L744.0,265.2 L744.5,259.7 L745.0,264.8 L745.5,258.7 L746.0,265.7 L746.5,257.7 L747.0,268.3 L747.5,260.0 L748.0,264.7 L748.5,257.5 L749.0,266.1 L749.5,259.0 L750.0,264.8 L750.5,259.2 L751.0,264.8 L751.5,260.1 L752.0,268.8 L752.5,259.9 L753.0,264.8 L753.5,260.0 L754.0,264.7 L754.5,259.8 L755.0,267.0 L755.5,259.0 L756.0,264.5 L756.5,258.1 L757.0,264.9 L757.5,259.1 L758.0,266.8 L758.5,258.7 L759.0,267.1 L759.5,258.3 L760.0,264.5 L760.5,257.9" fill="none" stroke="#f80a92" stroke-width="1.6"/>
<path d="M764.5,92.9 L765.0,87.0 L765.5,93.2 L766.0,86.8 L766.5,91.8 L767.0,87.2 L767.5,92.9 L768.0,86.1 L768.5,91.6 L769.0,86.6 L769.5,92.1 L770.0,86.4 L770.5,91.1 L771.0,85.3 L771.5,93.8 L772.0,84.4 L772.5,90.8 L773.0,85.1 L773.5,90.8 L774.0,84.1 L774.5,90.3 L775.0,84.1 L775.5,90.4 L776.0,84.7 L776.5,89.8 L777.0,84.4 L777.5,90.3 L778.0,84.9 L778.5,91.1 L779.0,84.6 L779.5,91.1 L780.0,85.4 L780.5,90.7 L781.0,84.5 L781.5,93.0 L782.0,84.6 L782.5,90.4 L783.0,83.1 L783.5,91.4 L784.0,83.0 L784.5,91.7 L785.0,85.1 L785.5,91.2 L786.0,85.4 L786.5,90.4 L787.0,85.1 L787.5,90.2 L788.0,85.3 L788.5,92.1 L789.0,84.1 L789.5,90.0" fill="none" stroke="#f80a92" stroke-width="1.6"/>
<path d="M25.0,90.0 L25.5,100.0 L26.0,108.0 L27.0,125.0 L29.5,230.0 L30.5,258.0 L31.0,262.0" fill="none" stroke="#c00c78" stroke-width="1.35"/>
<path d="M180.5,263.0 L181.0,245.0 L184.5,107.0 L185.5,86.0" fill="none" stroke="#c00c78" stroke-width="1.35"/>
<path d="M219.0,92.0 L219.5,100.0 L223.0,230.0 L224.0,262.0" fill="none" stroke="#c00c78" stroke-width="1.35"/>
<path d="M373.5,263.0 L374.5,245.0 L375.5,225.0 L377.5,107.0 L378.0,86.0" fill="none" stroke="#c00c78" stroke-width="1.35"/>
<path d="M400.0,90.0 L401.5,100.0 L403.0,130.0 L404.5,160.0 L406.0,170.5 L407.0,168.0 L408.5,115.0 L410.0,95.0 L411.0,91.0 L412.0,93.0 L413.0,100.0 L414.5,140.0 L416.0,225.0 L417.0,245.0 L418.0,263.0" fill="none" stroke="#c00c78" stroke-width="1.35"/>
<path d="M567.0,263.0 L568.0,245.0 L571.0,107.0 L571.5,86.0" fill="none" stroke="#c00c78" stroke-width="1.35"/>
<path d="M605.5,92.0 L606.0,100.0 L609.5,230.0 L610.0,262.0" fill="none" stroke="#c00c78" stroke-width="1.35"/>
<path d="M760.5,263.0 L761.0,245.0 L764.0,107.0 L764.5,86.0" fill="none" stroke="#c00c78" stroke-width="1.35"/>
</g>
<!-- trigger level line -->
<rect x="17" y="139" width="777" height="2" fill="#0e0ea8"/><line x1="17" y1="141.5" x2="794" y2="141.5" stroke="#1c1cb8" stroke-width="1" stroke-dasharray="1 1"/>
<rect x="406" y="129" width="2.5" height="17" fill="#1a30f0"/>
<rect x="413.5" y="129" width="2.5" height="17" fill="#1a30f0"/>
<polygon points="793.5,140 797,137 798,137 798,144 797,144" fill="#e8108a"/>
<polygon points="403.5,315 400,323 407,323" fill="#e8108a"/>
<!-- C2 marker -->
<text x="5.5" y="257" font-family="Liberation Sans" font-size="9" fill="#a01858" letter-spacing="0.2">C2</text>
<path d="M7.5,262.5 L7.5,260.5 L17,260.5" fill="none" stroke="#e01080" stroke-width="1.5"/>
</svg>

<!-- C2 channel box -->
<div class="a box" style="left:5px;top:325px;width:96px;height:43px;background:linear-gradient(90deg,#585896,#6a6aa8)">
  <div class="hdr" style="background:#f8109c;top:1px;height:13px;border-radius:3px 3px 0 0"></div>
  <div class="t" style="left:2px;top:2px;font-size:10.5px;letter-spacing:0.2px;color:#2a0020">C2</div>
  <div class="a" style="left:71px;top:3px;width:21.5px;height:9px;background:#100008;border-radius:2px"></div>
  <div class="t" style="left:72px;top:4px;font-size:7.5px;color:#e8509a;letter-spacing:0.1px">DC50</div>
  <div class="t" style="right:3px;top:18px;font-size:10px;letter-spacing:0.3px">200 mV/div</div>
  <div class="t" style="right:3px;top:31px;font-size:10px;letter-spacing:0.3px">-489.7 mV ofst</div>
</div>

<!-- Timebase box -->
<div class="a box" style="left:584px;top:325px;width:111px;height:42px">
  <div class="hdr" style="background:#d2d2d2;top:2px;height:11px;border-radius:2px 2px 0 0"></div>
  <div class="t" style="left:1px;top:3px;font-size:10px;letter-spacing:0.3px;color:#000">Timebase</div>
  <div class="t" style="right:2px;top:3px;font-size:10px;letter-spacing:0.3px;color:#000">0 ns</div>
  <div class="t" style="right:2px;top:18px;font-size:10px;letter-spacing:0.3px">100 ns/div</div>
  <div class="t" style="left:1px;top:31px;font-size:10px;letter-spacing:0.3px">20.0 kS</div>
  <div class="t" style="right:2px;top:31px;font-size:10px;letter-spacing:0.3px">20 GS/s</div>
</div>

<!-- Trigger box -->
<div class="a box" style="left:698px;top:325px;width:97px;height:43px">
  <div class="hdr" style="background:#d2d2d2;top:2px;height:11px;border-radius:2px 2px 0 0"></div>
  <div class="t" style="left:3px;top:3px;font-size:10px;letter-spacing:0.3px;color:#000">Trigger</div>
  <div class="a" style="left:82px;top:3px;width:12px;height:10px;background:#000;border-radius:3px"></div>
  <div class="t" style="left:82.5px;top:4px;font-size:8.5px;color:#fff;letter-spacing:0.2px">C2</div>
  <div class="t" style="left:3px;top:18px;font-size:10px;letter-spacing:0.3px">Stop</div>
  <div class="t" style="right:3px;top:18px;font-size:10px;letter-spacing:0.3px">694 mV</div>
  <div class="t" style="left:3px;top:31px;font-size:10px;letter-spacing:0.3px">Width</div>
  <div class="t" style="right:3px;top:31px;font-size:10px;letter-spacing:0.3px">Positive</div>
</div>

<!-- black band -->
<div class="a" style="left:0;top:369px;width:800px;height:231px;background:#000"></div>

<!-- tab -->
<div class="a" style="left:4px;top:374px;width:61px;height:33px;background:#36367a;border-top:1px solid #9a9ad0;border-left:1px solid #9a9ad0;border-right:1px solid #34344a;border-radius:4px 0 0 0"></div>
<div class="t" style="left:18px;top:385px;font-size:11px">Trigger</div>

<!-- close -->
<div class="a" style="left:752px;top:372px;width:44px;height:30px;background:#6565a6;border-radius:4px;border-top:1px solid #8888c4"></div>
<div class="t" style="left:758px;top:381px;font-size:13px">Close</div>

<!-- panel -->
<div class="a" style="left:4px;top:405px;width:792px;height:172px;background:#34346c;border-left:1px solid #8a8ac8;border-right:1px solid #22224a"></div>
<div class="a" style="left:65px;top:405px;width:731px;height:1px;background:#a8a8d8"></div>
<div class="a" style="left:156px;top:410px;width:1px;height:162px;background:#8080bc"></div>

<!-- trigger type labels -->
<div class="lab" style="left:20px;top:412px">Edge</div>
<div class="lab" style="left:64px;top:412px">Width</div>
<div class="lab" style="left:111px;top:412px">Glitch</div>
<div class="lab" style="left:15px;top:466px">Interval</div>
<div class="lab" style="left:62px;top:466px">Qualify</div>
<div class="lab" style="left:113px;top:466px">State</div>
<div class="lab" style="left:13px;top:520px">Dropout</div>
<div class="lab" style="left:66px;top:520px">Logic</div>

<!-- buttons row 1 -->
<div class="btn" style="left:14px;top:425px;width:41px;height:34px"></div>
<div class="btn sel" style="left:61px;top:426px;width:41px;height:34px"></div>
<div class="btn" style="left:106px;top:425px;width:41px;height:34px"></div>
<div class="btn" style="left:14px;top:479px;width:41px;height:34px"></div>
<div class="btn" style="left:60px;top:479px;width:41px;height:34px"></div>
<div class="btn" style="left:106px;top:479px;width:41px;height:34px"></div>
<div class="btn" style="left:14px;top:533px;width:41px;height:34px"></div>
<div class="btn" style="left:60px;top:533px;width:41px;height:34px"></div>

<svg class="a" style="left:0;top:400px" width="160" height="180" viewBox="0 400 160 180">
<path d="M18.5,452.5 L25,452.5" fill="none" stroke="#000010" stroke-width="1.5" stroke-linejoin="miter" stroke-linecap="butt"/>
<path d="M25,452.5 L32.5,452.5 L37.5,431.5 L44,431.5" fill="none" stroke="#f4d436" stroke-width="1.5" stroke-linejoin="miter" stroke-linecap="butt"/>
<path d="M44,431.5 L51,431.5" fill="none" stroke="#000010" stroke-width="1.5" stroke-linejoin="miter" stroke-linecap="butt"/>
<path d="M66,453.5 L71.5,453.5" fill="none" stroke="#000010" stroke-width="1.5" stroke-linejoin="miter" stroke-linecap="butt"/>
<path d="M71.5,453.5 L71.5,432.5" fill="none" stroke="#f4e8e0" stroke-width="1.5" stroke-linejoin="miter" stroke-linecap="butt"/>
<path d="M71.5,432.5 L93,432.5" fill="none" stroke="#000010" stroke-width="1.8" stroke-linejoin="miter" stroke-linecap="butt"/>
<path d="M93,432.5 L93,453.5" fill="none" stroke="#f4d436" stroke-width="1.5" stroke-linejoin="miter" stroke-linecap="butt"/>
<path d="M93,453.5 L98,453.5" fill="none" stroke="#000010" stroke-width="1.5" stroke-linejoin="miter" stroke-linecap="butt"/>
<path d="M73,445.5 L91.5,445.5" fill="none" stroke="#f4d436" stroke-width="1.2" stroke-linejoin="miter" stroke-linecap="butt"/><path d="M76.2,442.3 L73,445.5 L76.2,448.7" fill="none" stroke="#f4d436" stroke-width="1.7"/><path d="M88.3,442.3 L91.5,445.5 L88.3,448.7" fill="none" stroke="#f4d436" stroke-width="1.7"/>
<path d="M111,452.5 L119.5,452.5 L119.5,431.5 L129.5,431.5 L129.5,452.5 L132,452.5" fill="none" stroke="#000010" stroke-width="1.5" stroke-linejoin="miter" stroke-linecap="butt"/>
<rect x="132.5" y="431.5" width="4" height="21" fill="none" stroke="#ffd0b0" stroke-width="1.3"/>
<path d="M137,452.5 L143,452.5" fill="none" stroke="#000010" stroke-width="1.5" stroke-linejoin="miter" stroke-linecap="butt"/>
<path d="M19,506.5 L24.5,506.5" fill="none" stroke="#000010" stroke-width="1.5" stroke-linejoin="miter" stroke-linecap="butt"/>
<path d="M24.5,506.5 L24.5,485.5" fill="none" stroke="#f4e8e0" stroke-width="1.5" stroke-linejoin="miter" stroke-linecap="butt"/>
<path d="M25,485.5 L34.5,485.5 L34.5,506.5 L45,506.5" fill="none" stroke="#000010" stroke-width="1.5" stroke-linejoin="miter" stroke-linecap="butt"/>
<path d="M45.5,506.5 L45.5,485.5" fill="none" stroke="#f4e8e0" stroke-width="1.5" stroke-linejoin="miter" stroke-linecap="butt"/>
<path d="M46,485.5 L51,485.5" fill="none" stroke="#000010" stroke-width="1.5" stroke-linejoin="miter" stroke-linecap="butt"/>
<path d="M25.5,499 L44.5,499" fill="none" stroke="#f4d436" stroke-width="1.3" stroke-linejoin="miter" stroke-linecap="butt"/><path d="M28.7,495.8 L25.5,499 L28.7,502.2" fill="none" stroke="#f4d436" stroke-width="1.8"/><path d="M41.3,495.8 L44.5,499 L41.3,502.2" fill="none" stroke="#f4d436" stroke-width="1.8"/>
<path d="M64.5,493.5 L74.5,493.5 L74.5,483.5 L82.5,483.5 L82.5,493.5 L91,493.5" fill="none" stroke="#f4d436" stroke-width="1.3" stroke-linejoin="miter" stroke-linecap="butt"/>
<path d="M65,508.5 L74.5,508.5 L74.5,498.5 L82.5,498.5 L82.5,508.5 L91,508.5" fill="none" stroke="#000010" stroke-width="1.5" stroke-linejoin="miter" stroke-linecap="butt"/>
<path d="M91.5,489 L94.5,491.5 L95.5,494 L95.5,499 L94,501.5 L89.5,503" fill="none" stroke="#101040" stroke-width="1.3"/>
<path d="M91.5,500 L88.5,503 L91,505.5" fill="none" stroke="#101040" stroke-width="1.4"/>
<path d="M111.5,487.5 L116,487.5" fill="none" stroke="#000010" stroke-width="1" stroke-linejoin="miter" stroke-linecap="butt"/>
<path d="M111.5,490 L116,490" fill="none" stroke="#000010" stroke-width="1" stroke-linejoin="miter" stroke-linecap="butt"/>
<path d="M111.5,492.5 L116,492.5" fill="none" stroke="#000010" stroke-width="1" stroke-linejoin="miter" stroke-linecap="butt"/>
<path d="M111.5,495 L116,495" fill="none" stroke="#000010" stroke-width="1" stroke-linejoin="miter" stroke-linecap="butt"/>
<path d="M116.5,486.5 L127.5,486.5 L131.5,491.5 L127.5,496.5 L116.5,496.5 Z" fill="#f8c818" stroke="#000" stroke-width="1.4"/>
<path d="M131.5,491.5 L137.5,491.5" fill="none" stroke="#000010" stroke-width="1" stroke-linejoin="miter" stroke-linecap="butt"/>
<rect x="137.5" y="481.5" width="3.5" height="28.5" fill="#c8c8d8" stroke="#000" stroke-width="1.2"/>
<text x="112" y="506.5" font-family="Liberation Sans" font-size="7.5" fill="#fff" letter-spacing="1.2">cll</text>
<path d="M123,504.5 L136,504.5" fill="none" stroke="#e8e820" stroke-width="1.2" stroke-linejoin="miter" stroke-linecap="butt"/>
<path d="M133,502 L136.5,504.5 L133,507" fill="#e8e820" stroke="#e8e820" stroke-width="1"/>
<path d="M19,560.5 L28.5,560.5 L28.5,539.5 L41.5,539.5 L41.5,560.5 L42,560.5" fill="none" stroke="#000010" stroke-width="1.5" stroke-linejoin="miter" stroke-linecap="butt"/>
<path d="M42,560.5 L51,560.5" fill="none" stroke="#f4d436" stroke-width="1.6" stroke-linejoin="miter" stroke-linecap="butt"/>
<path d="M67,545 L71,545" fill="none" stroke="#000010" stroke-width="1" stroke-linejoin="miter" stroke-linecap="butt"/>
<path d="M67,547.5 L71,547.5" fill="none" stroke="#000010" stroke-width="1" stroke-linejoin="miter" stroke-linecap="butt"/>
<path d="M67,550 L71,550" fill="none" stroke="#000010" stroke-width="1" stroke-linejoin="miter" stroke-linecap="butt"/>
<path d="M67,552.5 L71,552.5" fill="none" stroke="#000010" stroke-width="1" stroke-linejoin="miter" stroke-linecap="butt"/>
<path d="M71.5,544.5 L82,544.5 L86,549.5 L82,554.5 L71.5,554.5 Z" fill="#f8c818" stroke="#000" stroke-width="1.4"/>
<path d="M86,549.5 L95,549.5" fill="none" stroke="#000010" stroke-width="1" stroke-linejoin="miter" stroke-linecap="butt"/>
</svg>

<!-- middle column -->
<div class="lab" style="left:190px;top:416px">Trigger On</div>
<div class="inp" style="left:170px;top:428px;width:99px;height:22px"><div class="t">C2</div></div>
<div class="lab" style="left:194px;top:475px;color:#7c7cb8">Coupling</div>
<div class="inp" style="left:170px;top:487px;width:99px;height:22px;border-bottom-color:#6a6aa8;border-right-color:#6464a0"><div class="t" style="color:#7070ac">DC</div></div>
<div class="lab" style="left:204px;top:533px">Level</div>
<div class="inp" style="left:170px;top:545px;width:99px;height:22px"><div class="t">694 mV</div></div>

<div class="lab" style="left:286px;top:415px">Positive</div>
<div class="btn sel" style="left:288px;top:429px;width:43px;height:35px"></div>
<div class="lab" style="left:284px;top:472px">Negative</div>
<div class="btn" style="left:287px;top:485px;width:43px;height:35px"></div>
<div class="btn" style="left:274px;top:531px;width:59px;height:35px;background:#6a6aaa"></div>
<div class="lab" style="left:291px;top:536px">Zero</div>
<div class="lab" style="left:289px;top:550px">Level</div>

<svg class="a" style="left:280px;top:425px" width="60" height="100" viewBox="280 425 60 100">
<path d="M294,457 L302.5,457" fill="none" stroke="#000010" stroke-width="1.5" stroke-linejoin="miter" stroke-linecap="butt"/>
<path d="M302.5,457 L302.5,436 L319.5,436 L319.5,457" fill="none" stroke="#f4d436" stroke-width="1.4" stroke-linejoin="miter" stroke-linecap="butt"/>
<path d="M320,457 L327,457" fill="none" stroke="#000010" stroke-width="1.5" stroke-linejoin="miter" stroke-linecap="butt"/>
<path d="M304,446.5 L318,446.5" fill="none" stroke="#f4d436" stroke-width="1.2" stroke-linejoin="miter" stroke-linecap="butt"/>
<circle cx="305" cy="446.5" r="1.6" fill="#f0d020"/><circle cx="317" cy="446.5" r="1.6" fill="#f0d020"/>
<polygon points="320.5,458.5 317.5,462.5 323.5,462.5" fill="#fff"/>
<path d="M294,491.5 L301.5,491.5" fill="none" stroke="#000010" stroke-width="1.5" stroke-linejoin="miter" stroke-linecap="butt"/>
<path d="M301.5,491.5 L301.5,512" fill="none" stroke="#f4e8e0" stroke-width="1.4" stroke-linejoin="miter" stroke-linecap="butt"/>
<path d="M301.5,512 L319.5,512 L319.5,491.5" fill="none" stroke="#f4d436" stroke-width="1.4" stroke-linejoin="miter" stroke-linecap="butt"/>
<path d="M320,491.5 L327,491.5" fill="none" stroke="#000010" stroke-width="1.5" stroke-linejoin="miter" stroke-linecap="butt"/>
<path d="M303.5,502 L317.5,502" fill="none" stroke="#f4d436" stroke-width="1.1" stroke-linejoin="miter" stroke-linecap="butt"/><path d="M306.1,499.4 L303.5,502 L306.1,504.6" fill="none" stroke="#f4d436" stroke-width="1.6"/><path d="M314.9,499.4 L317.5,502 L314.9,504.6" fill="none" stroke="#f4d436" stroke-width="1.6"/>
<polygon points="319.5,514 316.5,518 322.5,518" fill="#fff"/>
</svg>

<!-- range buttons -->
<div class="btn" style="left:355px;top:412px;width:103px;height:35px"></div>
<div class="lab" style="left:377px;top:424px">Less Than</div>
<div class="btn" style="left:355px;top:451px;width:103px;height:35px"></div>
<div class="lab" style="left:371px;top:463px">Greater Than</div>
<div class="btn" style="left:355px;top:490px;width:103px;height:35px"></div>
<div class="lab" style="left:382px;top:502px">In Range</div>
<div class="btn sel" style="left:356px;top:530px;width:103px;height:35px"></div>
<div class="lab" style="left:371px;top:541px;letter-spacing:0;color:#fbeefb">Out Of Range</div>

<div class="lab" style="left:481px;top:418px">Delta</div>
<div class="btn" style="left:478px;top:431px;width:35px;height:35px"></div>
<div class="t" style="left:483px;top:443px;font-size:11px">w ± s</div>
<div class="lab" style="left:521px;top:418px">Limits</div>
<div class="btn sel" style="left:521px;top:432px;width:35px;height:34px"></div>
<div class="t" style="left:522.5px;top:443px;font-size:11px">t</div>
<div class="t" style="left:526.5px;top:449px;font-size:7px">L</div>
<div class="t" style="left:529px;top:444px;font-size:9px">&lt;</div>
<div class="t" style="left:533px;top:444px;font-size:10px;letter-spacing:-0.3px">w</div>
<div class="t" style="left:541px;top:444px;font-size:9px">&lt;</div>
<div class="t" style="left:546.5px;top:443px;font-size:11px">t</div>
<div class="t" style="left:550px;top:449px;font-size:8px">u</div>

<div class="lab" style="left:490px;top:480px">Lower Limit</div>
<div class="inp" style="left:482px;top:493px;width:80px;height:21px"><div class="t" style="top:3px">47.5 ns</div></div>
<div class="lab" style="left:490px;top:528px">Upper Limit</div>
<div class="inp" style="left:482px;top:540px;width:80px;height:22px"><div class="t" style="top:4px">52 ns</div></div>

<!-- diagram -->
<div class="a" style="left:617px;top:413px;width:156px;height:79px;background:#000;border-right:2px solid #a4a4d4;border-bottom:2px solid #a4a4d4"></div>
<svg class="a" style="left:600px;top:400px" width="200" height="100" viewBox="600 400 200 100">
<path d="M629.5,430.5 L629.5,471" fill="none" stroke="#a0a0a0" stroke-width="1" stroke-linejoin="miter" stroke-linecap="butt"/><path d="M642.5,430.5 L642.5,471" fill="none" stroke="#a0a0a0" stroke-width="1" stroke-linejoin="miter" stroke-linecap="butt"/><path d="M655.5,430.5 L655.5,471" fill="none" stroke="#a0a0a0" stroke-width="1" stroke-linejoin="miter" stroke-linecap="butt"/><path d="M630.0,438.5 L642.0,438.5" fill="none" stroke="#a0a0a0" stroke-width="1.1" stroke-linejoin="miter" stroke-linecap="butt"/><path d="M633.5,435.0 L630.0,438.5 L633.5,442.0" fill="none" stroke="#a0a0a0" stroke-width="1.6"/><path d="M638.5,435.0 L642.0,438.5 L638.5,442.0" fill="none" stroke="#a0a0a0" stroke-width="1.6"/><path d="M642.5,438.5 L655.0,438.5" fill="none" stroke="#a0a0a0" stroke-width="1.1" stroke-linejoin="miter" stroke-linecap="butt"/><path d="M651.5,435.0 L655.0,438.5 L651.5,442.0" fill="none" stroke="#a0a0a0" stroke-width="1.5"/><path d="M622,466.5 L629.5,466.5 L629.5,451.5 L636.5,451.5 L636.5,466.5 L665,466.5" fill="none" stroke="#fff" stroke-width="1.5" stroke-linejoin="miter" stroke-linecap="butt"/><rect x="635.2" y="448" width="2.6" height="18.5" fill="#e8106a"/><polygon points="636.5,471.5 633.0,477.5 640.0,477.5" fill="#e8106a"/>
<path d="M679.5,430.5 L679.5,471" fill="none" stroke="#a0a0a0" stroke-width="1" stroke-linejoin="miter" stroke-linecap="butt"/><path d="M692.5,430.5 L692.5,471" fill="none" stroke="#a0a0a0" stroke-width="1" stroke-linejoin="miter" stroke-linecap="butt"/><path d="M705.5,430.5 L705.5,471" fill="none" stroke="#a0a0a0" stroke-width="1" stroke-linejoin="miter" stroke-linecap="butt"/><path d="M680.0,438.5 L692.0,438.5" fill="none" stroke="#a0a0a0" stroke-width="1.1" stroke-linejoin="miter" stroke-linecap="butt"/><path d="M683.5,435.0 L680.0,438.5 L683.5,442.0" fill="none" stroke="#a0a0a0" stroke-width="1.6"/><path d="M688.5,435.0 L692.0,438.5 L688.5,442.0" fill="none" stroke="#a0a0a0" stroke-width="1.6"/><path d="M692.5,438.5 L705.0,438.5" fill="none" stroke="#a0a0a0" stroke-width="1.1" stroke-linejoin="miter" stroke-linecap="butt"/><path d="M701.5,435.0 L705.0,438.5 L701.5,442.0" fill="none" stroke="#a0a0a0" stroke-width="1.5"/><path d="M672,466.5 L679.5,466.5 L679.5,451.5 L699.5,451.5 L699.5,466.5 L715,466.5" fill="none" stroke="#fff" stroke-width="1.5" stroke-linejoin="miter" stroke-linecap="butt"/>
<path d="M729.5,430.5 L729.5,471" fill="none" stroke="#a0a0a0" stroke-width="1" stroke-linejoin="miter" stroke-linecap="butt"/><path d="M742.5,430.5 L742.5,471" fill="none" stroke="#a0a0a0" stroke-width="1" stroke-linejoin="miter" stroke-linecap="butt"/><path d="M755.5,430.5 L755.5,471" fill="none" stroke="#a0a0a0" stroke-width="1" stroke-linejoin="miter" stroke-linecap="butt"/><path d="M730.0,438.5 L742.0,438.5" fill="none" stroke="#a0a0a0" stroke-width="1.1" stroke-linejoin="miter" stroke-linecap="butt"/><path d="M733.5,435.0 L730.0,438.5 L733.5,442.0" fill="none" stroke="#a0a0a0" stroke-width="1.6"/><path d="M738.5,435.0 L742.0,438.5 L738.5,442.0" fill="none" stroke="#a0a0a0" stroke-width="1.6"/><path d="M742.5,438.5 L755.0,438.5" fill="none" stroke="#a0a0a0" stroke-width="1.1" stroke-linejoin="miter" stroke-linecap="butt"/><path d="M751.5,435.0 L755.0,438.5 L751.5,442.0" fill="none" stroke="#a0a0a0" stroke-width="1.5"/><path d="M722,466.5 L729.5,466.5 L729.5,451.5 L761.5,451.5 L761.5,466.5 L765,466.5" fill="none" stroke="#fff" stroke-width="1.5" stroke-linejoin="miter" stroke-linecap="butt"/><rect x="760.2" y="448" width="2.6" height="18.5" fill="#e8106a"/><polygon points="761.5,471.5 758.0,477.5 765.0,477.5" fill="#e8106a"/>
</svg>
<div class="a" style="left:600px;top:496px;width:190px;font-size:12px;line-height:15px;text-align:center;color:#fff;letter-spacing:0.2px">Trigger at end of a<br>positive pulse<br>when pulse width<br>is outside<br>of specified range.</div>

<!-- footer -->
<div class="t" style="left:9px;top:582px;font-size:14.5px;font-weight:bold;color:#1c1cf8;letter-spacing:0.3px">LeCroy</div><div class="a" style="left:7px;top:595px;width:56px;height:2px;background:#1c1cf0"></div>
<div class="t" style="left:680px;top:586px;font-size:11px">1/6/2004 1:41:02 PM</div>
</body></html>
